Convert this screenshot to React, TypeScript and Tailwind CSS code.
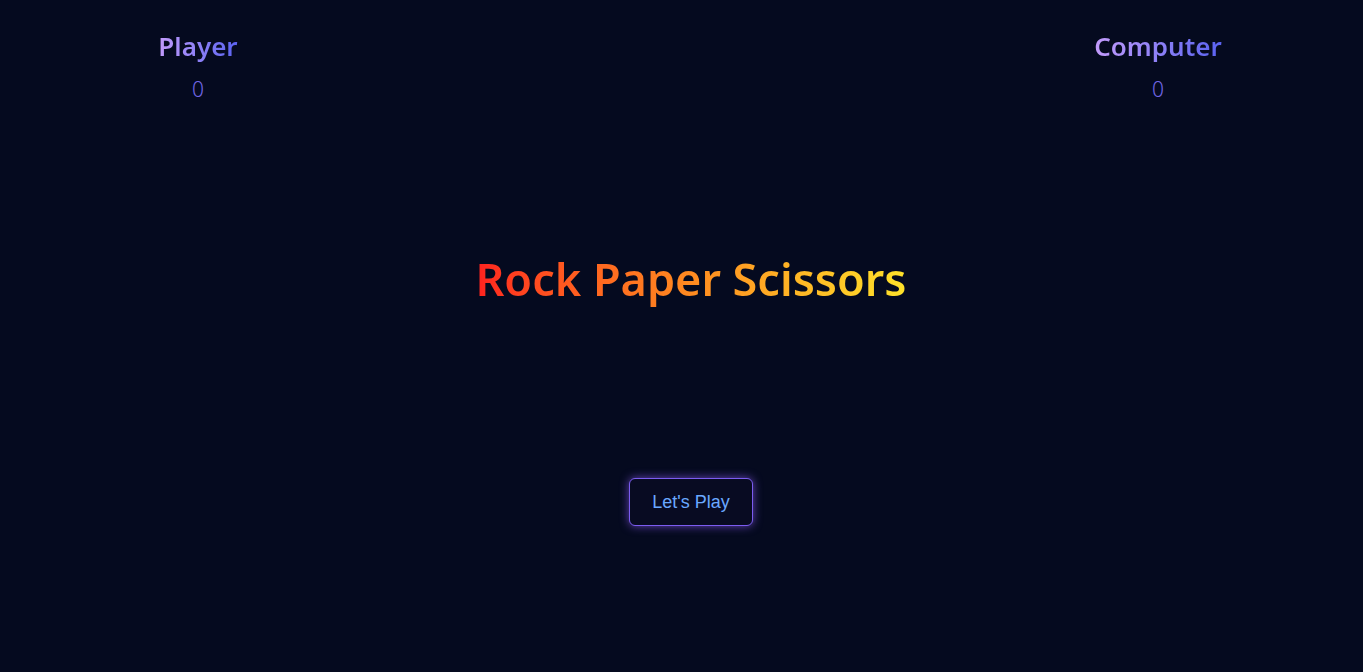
export default function App() {
  return (
    <div className="min-h-screen bg-[#050a1f] flex flex-col font-['Noto_Sans',sans-serif]">
      {/* Scoreboard */}
      <header className="flex justify-between pl-[98px] pr-[105px] pt-[28px]">
        <div className="w-[200px] flex flex-col items-center">
          <h2 className="text-[26px] leading-[36px] font-semibold bg-gradient-to-r from-[#c39bfb] to-[#5a62f0] bg-clip-text text-transparent">
            Player
          </h2>
          <span className="mt-[10px] text-[21px] leading-[30px] font-light text-[#7166e6]">0</span>
        </div>
        <div className="w-[200px] flex flex-col items-center">
          <h2 className="text-[26px] leading-[36px] font-semibold bg-gradient-to-r from-[#c39bfb] to-[#5a62f0] bg-clip-text text-transparent">
            Computer
          </h2>
          <span className="mt-[10px] text-[21px] leading-[30px] font-light text-[#7166e6]">0</span>
        </div>
      </header>

      {/* Title */}
      <main className="flex flex-col items-center pl-[19px]">
        <h1 className="mt-[145px] text-[45px] leading-[60px] font-semibold bg-gradient-to-r from-[#ff1f1f] via-[#ff8a20] to-[#ffe22a] bg-clip-text text-transparent">
          Rock Paper Scissors
        </h1>

        <button className="mt-[169px] w-[124px] h-[48px] rounded-md border-[1.5px] border-[#7b5cf0] bg-[#080b22] text-[18px] text-[#6aa8ff] font-['Liberation_Sans',sans-serif] shadow-[0_0_10px_rgba(139,92,246,0.7)]">
          Let's Play
        </button>
      </main>
    </div>
  );
}
